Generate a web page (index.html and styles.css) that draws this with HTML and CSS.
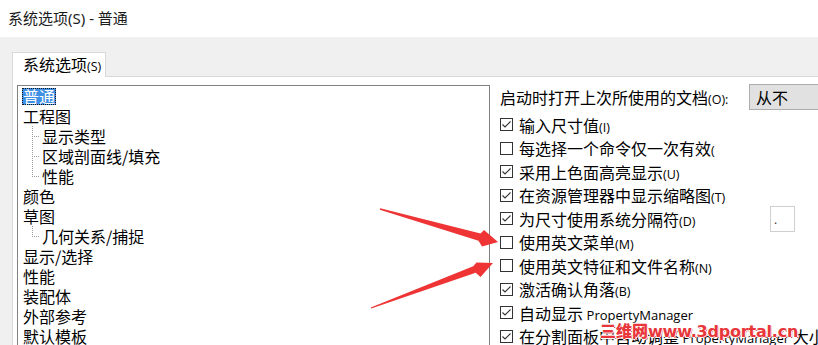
FILE: index.html
```html
<!DOCTYPE html>
<html lang="zh-CN">
<head>
<meta charset="utf-8">
<title>系统选项(S) - 普通</title>
<link rel="stylesheet" href="styles.css">
</head>
<body>
<div class="window">
  <div class="titlebar">系统选项(S) - 普通</div>
  <div class="tabarea">
    <div class="tab">系统选项<span class="mn">(S)</span></div>
  </div>
  <div class="page">
    <div class="tree">
      <div class="item"><span class="sel">普通</span></div>
      <div class="item">工程图</div>
      <div class="item child">显示类型</div>
      <div class="item child">区域剖面线/填充</div>
      <div class="item child last">性能</div>
      <div class="item">颜色</div>
      <div class="item">草图</div>
      <div class="item child first last">几何关系/捕捉</div>
      <div class="item">显示/选择</div>
      <div class="item">性能</div>
      <div class="item">装配体</div>
      <div class="item">外部参考</div>
      <div class="item">默认模板</div>
    </div>
    <div class="options">
      <div class="row-first">
        <span class="label">启动时打开上次所使用的文档<span class="mn">(O):</span></span>
        <div class="combo">从不</div>
      </div>
      <div class="row"><span class="cb on"></span><span>输入尺寸值<span class="mn">(I)</span></span></div>
      <div class="row"><span class="cb"></span><span>每选择一个命令仅一次有效<span class="mn">(</span></span></div>
      <div class="row"><span class="cb on"></span><span>采用上色面高亮显示<span class="mn">(U)</span></span></div>
      <div class="row"><span class="cb on"></span><span>在资源管理器中显示缩略图<span class="mn">(T)</span></span></div>
      <div class="row"><span class="cb on"></span><span>为尺寸使用系统分隔符<span class="mn">(D)</span></span><span class="sepbox">.</span></div>
      <div class="row"><span class="cb"></span><span>使用英文菜单<span class="mn">(M)</span></span></div>
      <div class="row"><span class="cb"></span><span>使用英文特征和文件名称<span class="mn">(N)</span></span></div>
      <div class="row"><span class="cb on"></span><span>激活确认角落<span class="mn">(B)</span></span></div>
      <div class="row"><span class="cb on"></span><span>自动显示 <span class="lat">PropertyManager</span></span></div>
      <div class="row"><span class="cb on"></span><span>在分割面板中自动调整 <span class="lat">PropertyManager</span> 大小</span></div>
    </div>
  </div>
  <svg class="arrows" width="818" height="345" viewBox="0 0 818 345">
    <polygon fill="#ee3434" points="380.2,208.3 480.5,233.6 484,230 498,242 482,246.5 478.5,240.8 379.8,209.7"/>
    <polygon fill="#ee3434" points="371.2,308.6 475.7,272.8 480.5,277 493,263 476.5,262.5 473.2,266.2 370.8,307.4"/>
  </svg>
  <div class="watermark"><span class="wm-cn">三维网</span><span class="wm-en">www.3dportal.cn</span></div>
</div>
</body>
</html>
```

FILE: styles.css
```css
* { box-sizing: border-box; }
html, body { margin: 0; padding: 0; }
body {
  font-family: "Noto Sans", "Noto Sans CJK SC", sans-serif;
  color: #000;
  background: #f0f0f0;
}
.window {
  position: relative;
  width: 818px;
  height: 345px;
  overflow: hidden;
  background: #f0f0f0;
}
.titlebar {
  height: 37px;
  line-height: 36px;
  padding-left: 8px;
  background: #fff;
  font-size: 15px;
  color: #1a1a1a;
}
.tabarea {
  padding: 15px 0 0 12px;
  display: flex;
}
.tab {
  position: relative;
  z-index: 1;
  width: 94px;
  height: 25px;
  margin-bottom: -1px;
  padding-left: 10px;
  background: #fff;
  border: 1px solid #d9d9d9;
  border-bottom: none;
  font-size: 16px;
  line-height: 22px;
  font-family: "Noto Sans CJK SC", sans-serif;
}
.mn {
  font-family: "Open Sans", "Noto Sans", sans-serif;
  font-size: 12.5px;
}
.page {
  margin-left: 12px;
  height: 280px;
  background: #fff;
  border-top: 1px solid #d9d9d9;
  border-left: 1px solid #d9d9d9;
  display: flex;
  align-items: flex-start;
}
.tree {
  margin: 8px 0 0 4px;
  width: 473px;
  height: 300px;
  flex: none;
  border: 1px solid #828282;
  padding: 0 0 0 5px;
  font-family: "Noto Sans CJK SC", sans-serif;
  font-size: 16px;
}
.item {
  height: 20px;
  line-height: 20px;
  display: flex;
  align-items: center;
  white-space: nowrap;
}
.sel {
  display: inline-block;
  height: 17px;
  line-height: 16px;
  padding: 0 1px;
  margin-left: -1px;
  background: #3f8fe4;
  color: #fff;
  outline: 1px dotted #1a1a1a;
  outline-offset: -1px;
}
.child::before {
  content: "";
  flex: none;
  align-self: stretch;
  width: 8px;
  margin: 0 2px 0 9px;
  background:
    repeating-linear-gradient(to bottom, #9a9a9a 0 1px, transparent 1px 2px) left top / 1px 100% no-repeat,
    repeating-linear-gradient(to right, #9a9a9a 0 1px, transparent 1px 2px) left 10px / 100% 1px no-repeat;
}
.child.last::before {
  background:
    repeating-linear-gradient(to bottom, #9a9a9a 0 1px, transparent 1px 2px) left top / 1px 11px no-repeat,
    repeating-linear-gradient(to right, #9a9a9a 0 1px, transparent 1px 2px) left 10px / 100% 1px no-repeat;
}
.options {
  flex: 1;
  min-width: 0;
  padding: 7px 23px 0 10px;
  font-family: "Noto Sans CJK SC", sans-serif;
  font-size: 16px;
  white-space: nowrap;
}
.row-first {
  height: 26px;
  display: flex;
  align-items: center;
  margin-bottom: 3px;
}
.label { width: 249px; flex: none; }
.combo {
  flex: none;
  width: 90px;
  height: 26px;
  line-height: 24px;
  padding-left: 6px;
  background: #e1e1e1;
  border: 1px solid #adadad;
}
.row {
  height: 23.5px;
  display: flex;
  align-items: center;
}
.cb {
  flex: none;
  width: 13px;
  height: 13px;
  margin-right: 6px;
  border: 1px solid #333;
  background: #fff;
}
.cb.on {
  background: #fff url("data:image/svg+xml;utf8,<svg xmlns='http://www.w3.org/2000/svg' width='11' height='11' viewBox='0 0 11 11'><polyline points='1.5,5.5 4,8 9.5,2.5' fill='none' stroke='%23333' stroke-width='1.1'/></svg>") center / 11px 11px no-repeat;
}
.lat {
  font-family: "Open Sans", "Noto Sans", sans-serif;
  font-size: 13px;
}
.sepbox {
  flex: none;
  margin-left: auto;
  width: 25px;
  height: 26px;
  border: 1px solid #cfcfcf;
  font-family: "Open Sans", sans-serif;
  font-size: 12px;
  line-height: 26px;
  padding-left: 3px;
  color: #333;
}
.arrows {
  position: absolute;
  left: 0;
  top: 0;
  pointer-events: none;
}
.watermark {
  position: absolute;
  left: 600px;
  top: 318px;
  color: #e8363b;
  font-weight: 900;
  white-space: nowrap;
  text-shadow: 1px 0 0 #fff, -1px 0 0 #fff, 0 1px 0 #fff, 0 -1px 0 #fff, 1px 1px 0 #b02020;
}
.wm-cn {
  font-family: "Noto Sans CJK SC", sans-serif;
  font-size: 16px;
}
.wm-en {
  font-family: "DejaVu Sans", sans-serif;
  font-size: 16px;
  letter-spacing: -0.2px;
}
```
